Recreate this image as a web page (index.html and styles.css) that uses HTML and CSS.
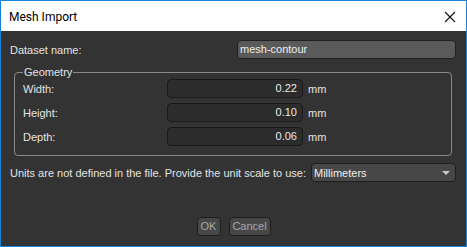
FILE: index.html
```html
<!DOCTYPE html>
<html>
<head>
<meta charset="utf-8">
<link rel="stylesheet" href="styles.css">
</head>
<body>
<div class="window">
  <div class="titlebar">
    <span class="title">Mesh Import</span>
    <svg class="close" width="12" height="12" viewBox="0 0 12 12"><path d="M1 1 L11 11 M11 1 L1 11" stroke="#111" stroke-width="1.1" fill="none"/></svg>
  </div>
  <div class="content">
    <div class="row name-row">
      <span class="label">Dataset name:</span>
      <div class="textbox">mesh-contour</div>
    </div>
    <div class="group">
      <span class="legend">Geometry</span>
      <div class="grow"><span class="glabel">Width:</span><div class="spin">0.22</div><span class="unit">mm</span></div>
      <div class="grow"><span class="glabel">Height:</span><div class="spin">0.10</div><span class="unit">mm</span></div>
      <div class="grow"><span class="glabel">Depth:</span><div class="spin">0.06</div><span class="unit">mm</span></div>
    </div>
    <div class="row units-row">
      <span class="label units-label">Units are not defined in the file. Provide the unit scale to use:</span>
      <div class="combo"><span>Millimeters</span><span class="arrow"></span></div>
    </div>
    <div class="buttons">
      <div class="btn ok">OK</div>
      <div class="btn cancel">Cancel</div>
    </div>
  </div>
</div>
</body>
</html>
```
FILE: styles.css
```css
html, body { margin: 0; padding: 0; }
body { width: 467px; height: 247px; overflow: hidden; font-family: "Liberation Sans", Arial, sans-serif; font-size: 11px; }
.window {
  box-sizing: border-box; width: 467px; height: 247px;
  border: 1px solid #1883d7; background: #333333;
  display: flex; flex-direction: column;
}
.titlebar {
  height: 30px; background: #ffffff; display: flex; align-items: center;
  justify-content: space-between; padding: 0 10px 0 8px;
}
.title { font-family: Roboto, "Noto Sans", sans-serif; font-size: 12px; color: #000; padding-top: 1px; }
.close { margin-right: 0px; margin-top: 1px; }
.content { flex: 1; padding: 9px 10px 0 9px; color: #e4e4e4; display: flex; flex-direction: column; }
.row { display: flex; align-items: center; height: 19px; }
.name-row { justify-content: space-between; }
.label { padding-left: 0; }
.textbox {
  box-sizing: border-box; width: 219px; height: 19px; background: #5a5a5a;
  border: 1px solid #202020; border-radius: 4px; padding: 0 2px; line-height: 17px; color: #eeeeee;
}
.group {
  position: relative; margin: 13px 4px 0 4px; height: 84px; box-sizing: border-box;
  border: 1px solid #8a8a8a; border-radius: 4px; padding: 6px 0 0 8px;
  display: flex; flex-direction: column; gap: 5px;
}
.legend { position: absolute; left: 8px; top: -8px; background: #333333; padding: 0 1px; line-height: 14px; color: #e4e4e4; }
.grow { display: flex; align-items: center; height: 19px; }
.glabel { width: 144px; }
.spin {
  box-sizing: border-box; width: 136px; height: 19px; background: #2c2c2c;
  border: 1px solid #1a1a1a; border-radius: 4px; text-align: right; padding-right: 5px; line-height: 17px; color: #e8e8e8;
}
.unit { margin-left: 5px; }
.units-row { margin-top: 7px; }
.units-label { flex: 1; }
.combo {
  box-sizing: border-box; width: 145px; height: 19px; background: #474747;
  border: 1px solid #1e1e1e; border-radius: 4px; padding: 0 4px 0 2px;
  display: flex; align-items: center; justify-content: space-between; color: #eeeeee;
}
.arrow { width: 0; height: 0; border-left: 4px solid transparent; border-right: 4px solid transparent; border-top: 4px solid #c8c8c8; margin-right: 1px; }
.buttons { display: flex; justify-content: center; gap: 8px; margin-top: 35px; padding-left: 1px; }
.btn {
  box-sizing: border-box; height: 19px; background: #474747; border: 1px solid #1e1e1e;
  border-radius: 4px; color: #a8a8a8; line-height: 17px; text-align: center;
}
.ok { width: 24px; }
.cancel { width: 42px; }
```
